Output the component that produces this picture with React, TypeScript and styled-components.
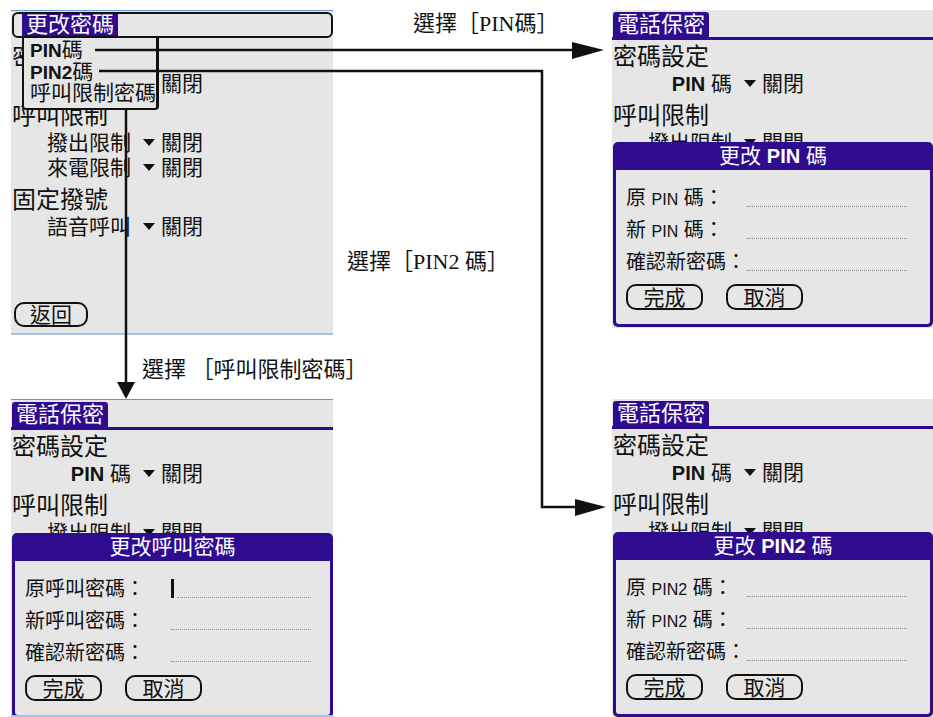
import React from "react";
import styled, { createGlobalStyle } from "styled-components";

const PURPLE = "#2f0b8f";
const SCREEN_BG = "#e6e6e6";
const INK = "#111";

const GlobalStyle = createGlobalStyle`
  html, body {
    margin: 0;
    padding: 0;
    background: #fff;
  }
  body {
    font-family: "Liberation Sans", "Noto Sans CJK TC", sans-serif;
  }
`;

const Canvas = styled.div`
  position: relative;
  width: 933px;
  height: 717px;
  overflow: hidden;
  background: #fff;
`;

// one Palm screenshot placed on the diagram
const Screen = styled.div<{ $x: number; $y: number; $w: number; $h: number; $frame?: boolean }>`
  position: absolute;
  left: ${(p) => p.$x}px;
  top: ${(p) => p.$y}px;
  width: ${(p) => p.$w}px;
  height: ${(p) => p.$h}px;
  box-sizing: border-box;
  display: flex;
  flex-direction: column;
  overflow: hidden;
  background: ${SCREEN_BG};
  color: ${INK};
  font-family: "Liberation Sans", "Noto Sans CJK TC", sans-serif;
  border-top: ${(p) => (p.$frame ? "1px solid #6d8fd3" : "none")};
  border-bottom: ${(p) => (p.$frame ? "2px solid #a8bfe8" : "none")};
`;

const TitleBar = styled.div`
  display: flex;
  padding: 2px 0 0 1px;
  border-bottom: 3px solid ${PURPLE};
`;

const TitleTab = styled.div`
  height: 25px;
  line-height: 25px;
  padding: 0 4px;
  font-size: 22px;
  color: #fff;
  background: ${PURPLE};
  border-radius: 3px 3px 0 0;
`;

const MenuBar = styled.div`
  display: flex;
  height: 26px;
  box-sizing: border-box;
  margin: 1px 0 2px 1px;
  padding-left: 8px;
  border: 2px solid ${INK};
  border-radius: 6px;
`;

const MenuTitle = styled.div`
  padding: 0 4px;
  font-size: 22px;
  line-height: 22px;
  color: #fff;
  background: ${PURPLE};
`;

const Dropdown = styled.div`
  position: absolute;
  left: 11px;
  top: 27px;
  width: 137px;
  box-sizing: border-box;
  padding: 2px 0 4px 6px;
  background: ${SCREEN_BG};
  border: 2px solid ${INK};
  border-top: none;
  border-right-width: 3px;
  border-radius: 0 0 4px 4px;
  z-index: 2;
`;

const MenuItem = styled.div`
  font-size: 21px;
  line-height: 20.5px;
  white-space: nowrap;
`;

const Latin = styled.span<{ $size: number; $bold?: boolean }>`
  font-family: "Liberation Sans", sans-serif;
  font-size: ${(p) => p.$size}px;
  font-weight: ${(p) => (p.$bold ? 700 : 400)};
`;

const Form = styled.div`
  display: flex;
  flex-direction: column;
  padding: 4px 0 0 1px;
`;

const Heading = styled.div<{ $gap?: boolean }>`
  margin-top: ${(p) => (p.$gap ? 9 : 0)}px;
  font-size: 24px;
  line-height: 25px;
  white-space: nowrap;
`;

const Row = styled.div`
  display: flex;
  align-items: center;
  height: 25px;
  font-size: 21px;
  white-space: nowrap;
`;

const RowLabel = styled.span`
  width: 119px;
  text-align: right;
`;

const Trigger = styled.span`
  width: 0;
  height: 0;
  margin: 3px 6px 0 12px;
  border-left: 6px solid transparent;
  border-right: 6px solid transparent;
  border-top: 7px solid ${INK};
`;

const Dialog = styled.div<{ $top: number }>`
  position: absolute;
  left: 1px;
  right: 0;
  top: ${(p) => p.$top}px;
  display: flex;
  flex-direction: column;
  padding: 0 3px 3px;
  background: ${PURPLE};
  border-radius: 5px;
  z-index: 2;
`;

const DialogTitle = styled.div`
  height: 28px;
  line-height: 28px;
  text-align: center;
  font-size: 21px;
  color: #fff;
  white-space: nowrap;
`;

const DialogBody = styled.div`
  display: flex;
  flex-direction: column;
  padding: 10px 0 14px 10px;
  background: ${SCREEN_BG};
  border-radius: 0 0 3px 3px;
`;

const Field = styled.div`
  display: flex;
  align-items: center;
  height: 32px;
`;

const FieldLabel = styled.span<{ $w: number }>`
  width: ${(p) => p.$w}px;
  font-size: 20px;
  white-space: nowrap;
`;

const Blank = styled.span<{ $w: number }>`
  display: flex;
  align-items: flex-end;
  width: ${(p) => p.$w}px;
  height: 22px;
`;

const Dots = styled.span`
  flex: 1;
  border-bottom: 1px dotted #8a8a8a;
`;

const Cursor = styled.span`
  width: 3px;
  height: 19px;
  margin-right: 3px;
  background: ${INK};
`;

const ButtonRow = styled.div`
  display: flex;
  gap: 23px;
  margin-top: 8px;
`;

const PalmButton = styled.div<{ $w?: number }>`
  width: ${(p) => p.$w ?? 77}px;
  height: 26px;
  box-sizing: border-box;
  display: flex;
  align-items: center;
  justify-content: center;
  border: 2px solid ${INK};
  border-radius: 10px;
  font-size: 21px;
  line-height: 1;
`;

const BackButton = styled(PalmButton)`
  margin: auto 0 6px 3px;
  height: 25px;
`;

const Note = styled.div<{ $x: number; $y: number }>`
  position: absolute;
  left: ${(p) => p.$x}px;
  top: ${(p) => p.$y}px;
  font-family: "Liberation Serif", "Noto Sans CJK TC", serif;
  font-size: 22px;
  line-height: 24px;
  color: ${INK};
  white-space: nowrap;
  z-index: 3;
`;

const Arrows = styled.svg`
  position: absolute;
  left: 0;
  top: 0;
  z-index: 4;
  pointer-events: none;
`;

const settingItems = (
  [
    ["h", "密碼設定"],
    ["r", "PIN"],
    ["h", "呼叫限制"],
    ["r", "撥出限制"],
    ["r", "來電限制"],
    ["h", "固定撥號"],
    ["r", "語音呼叫"],
  ] as const
);

// the 電話保密 form underneath; `count` cuts off what a dialog would hide anyway
const SettingsForm = ({ count = settingItems.length }: { count?: number }) => (
  <Form>
    {settingItems.slice(0, count).map(([kind, text], i) =>
      kind === "h" ? (
        <Heading key={i} $gap={i > 0}>
          {text}
        </Heading>
      ) : (
        <Row key={i}>
          <RowLabel>
            {text === "PIN" ? (
              <>
                <Latin $size={20} $bold>PIN</Latin> 碼
              </>
            ) : (
              text
            )}
          </RowLabel>
          <Trigger />
          <span>關閉</span>
        </Row>
      )
    )}
  </Form>
);

type FieldDef = { label: React.ReactNode; caret?: boolean };

const PasswordDialog = ({
  top,
  title,
  fields,
  labelWidth,
  blankWidth,
}: {
  top: number;
  title: React.ReactNode;
  fields: FieldDef[];
  labelWidth: number;
  blankWidth: number;
}) => (
  <Dialog $top={top}>
    <DialogTitle>{title}</DialogTitle>
    <DialogBody>
      {fields.map((f, i) => (
        <Field key={i}>
          <FieldLabel $w={labelWidth}>{f.label}</FieldLabel>
          <Blank $w={blankWidth}>
            {f.caret && <Cursor />}
            <Dots />
          </Blank>
        </Field>
      ))}
      <ButtonRow>
        <PalmButton>完成</PalmButton>
        <PalmButton>取消</PalmButton>
      </ButtonRow>
    </DialogBody>
  </Dialog>
);

const pinLabel = (prefix: string, code: string) => (
  <>
    {prefix} <Latin $size={16}>{code}</Latin> 碼：
  </>
);

const PhoneTitle = () => (
  <TitleBar>
    <TitleTab>電話保密</TitleTab>
  </TitleBar>
);

export default function App() {
  return (
    <Canvas>
      <GlobalStyle />

      {/* menu open: 更改密碼 */}
      <Screen $x={11} $y={10} $w={322} $h={325} $frame>
        <MenuBar>
          <MenuTitle>更改密碼</MenuTitle>
        </MenuBar>
        <SettingsForm />
        <BackButton $w={74}>返回</BackButton>
        <Dropdown>
          <MenuItem>
            <Latin $size={19} $bold>PIN</Latin>碼
          </MenuItem>
          <MenuItem>
            <Latin $size={19} $bold>PIN2</Latin>碼
          </MenuItem>
          <MenuItem>呼叫限制密碼</MenuItem>
        </Dropdown>
      </Screen>

      <Screen $x={612} $y={10} $w={321} $h={318}>
        <PhoneTitle />
        <SettingsForm count={4} />
        <PasswordDialog
          top={132}
          title={
            <>
              更改 <Latin $size={20} $bold>PIN</Latin> 碼
            </>
          }
          fields={[{ label: pinLabel("原", "PIN") }, { label: pinLabel("新", "PIN") }, { label: "確認新密碼：" }]}
          labelWidth={121}
          blankWidth={160}
        />
      </Screen>

      <Screen $x={11} $y={399} $w={322} $h={318} $frame>
        <PhoneTitle />
        <SettingsForm count={4} />
        <PasswordDialog
          top={133}
          title="更改呼叫密碼"
          fields={[{ label: "原呼叫密碼：", caret: true }, { label: "新呼叫密碼：" }, { label: "確認新密碼：" }]}
          labelWidth={146}
          blankWidth={140}
        />
      </Screen>

      <Screen $x={612} $y={399} $w={321} $h={318}>
        <PhoneTitle />
        <SettingsForm count={4} />
        <PasswordDialog
          top={133}
          title={
            <>
              更改 <Latin $size={20} $bold>PIN2</Latin> 碼
            </>
          }
          fields={[{ label: pinLabel("原", "PIN2") }, { label: pinLabel("新", "PIN2") }, { label: "確認新密碼：" }]}
          labelWidth={121}
          blankWidth={160}
        />
      </Screen>

      <Note $x={413} $y={12}>
        選擇［PIN碼］
      </Note>
      <Note $x={347} $y={250}>
        選擇［PIN2 碼］
      </Note>
      <Note $x={142} $y={358}>
        選擇 ［呼叫限制密碼］
      </Note>

      <Arrows width={933} height={717} viewBox="0 0 933 717">
        <g stroke={INK} strokeWidth={2.5} fill="none">
          <line x1={95} y1={50} x2={574} y2={50} />
          <polyline points="99,71 542,71 542,507 577,507" />
          <line x1={126} y1={108} x2={126} y2={384} />
        </g>
        <g fill={INK}>
          <polygon points="572,42 604,50 572,59" />
          <polygon points="575,499 606,507 575,516" />
          <polygon points="117,382 126,399 135,382" />
        </g>
      </Arrows>
    </Canvas>
  );
}
